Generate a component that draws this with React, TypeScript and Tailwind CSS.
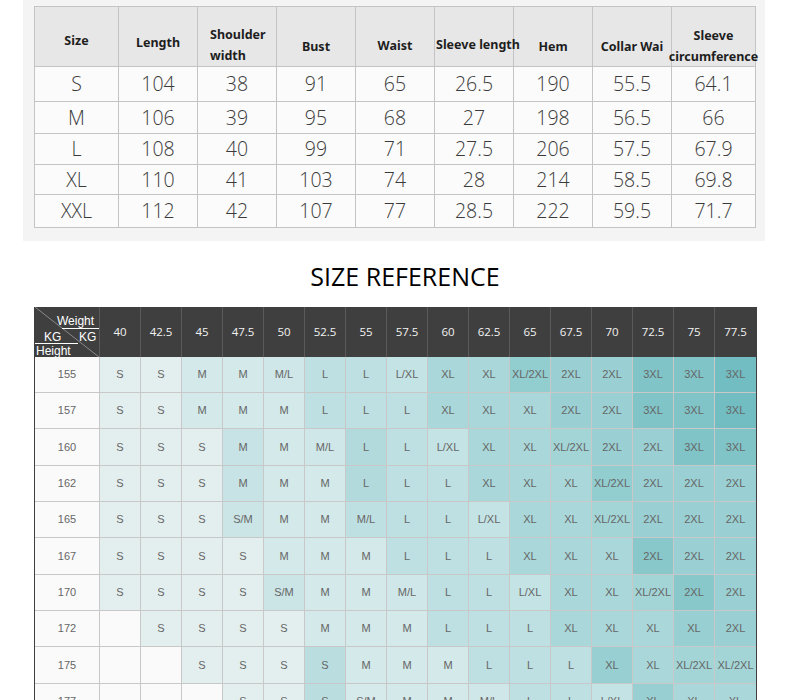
import * as React from 'react';

const measureHead = [
  { lines: ['Size'], box: 'pt-[8px] items-center' },
  { lines: ['Length'], box: 'pt-[12px] items-center' },
  { lines: ['Shoulder', 'width'], box: 'pt-[17px] items-start pl-[12px]' },
  { lines: ['Bust'], box: 'pt-[20px] items-center' },
  { lines: ['Waist'], box: 'pt-[18px] items-center' },
  { lines: ['Sleeve length'], box: 'pt-[16px] items-start pl-[1px]' },
  { lines: ['Hem'], box: 'pt-[20px] items-center' },
  { lines: ['Collar Wai'], box: 'pt-[20px] items-center' },
  { lines: ['Sleeve', 'circumference'], box: 'pt-[19px] items-center' },
];

const measureRows = [
  { h: 'h-[35px]', cells: ['S', '104', '38', '91', '65', '26.5', '190', '55.5', '64.1'] },
  { h: 'h-[32px]', cells: ['M', '106', '39', '95', '68', '27', '198', '56.5', '66'] },
  { h: 'h-[31px]', cells: ['L', '108', '40', '99', '71', '27.5', '206', '57.5', '67.9'] },
  { h: 'h-[30px]', cells: ['XL', '110', '41', '103', '74', '28', '214', '58.5', '69.8'] },
  { h: 'h-[33px]', cells: ['XXL', '112', '42', '107', '77', '28.5', '222', '59.5', '71.7'] },
];

const weights = ['40', '42.5', '45', '47.5', '50', '52.5', '55', '57.5', '60', '62.5', '65', '67.5', '70', '72.5', '75', '77.5'];

// '-' = empty cell, '*' = darker shade of the same size
const chart = [
  ['155', 'S S M M M/L L L L/XL XL XL XL/2XL* 2XL 2XL 3XL 3XL 3XL*'],
  ['157', 'S S M M M L L L XL XL XL 2XL 2XL 3XL 3XL 3XL*'],
  ['160', 'S S S M* M M/L L* L L/XL XL XL XL/2XL 2XL 2XL 3XL 3XL'],
  ['162', 'S S S M* M M L* L L XL XL XL XL/2XL* 2XL 2XL 2XL'],
  ['165', 'S S S S/M* M M M/L* L L L/XL XL XL XL/2XL 2XL 2XL 2XL'],
  ['167', 'S S S S M M M L L L XL XL XL 2XL* 2XL 2XL'],
  ['170', 'S S S S S/M* M M M/L L L L/XL XL XL XL/2XL 2XL* 2XL'],
  ['172', '- S S S S M M M L L L XL XL XL XL* 2XL'],
  ['175', '- - S S S S* M M M L L L XL* XL XL/2XL XL/2XL'],
  ['177', '- - - S S S* S/M M M M/L L L L/XL XL* XL XL'],
];

const rowHeights = ['h-[36px]', 'h-[36px]', 'h-[37px]', 'h-[36px]', 'h-[36px]', 'h-[37px]', 'h-[36px]', 'h-[36px]', 'h-[37px]', 'h-[36px]'];

const shade: Record<string, string> = {
  '-': 'bg-[#fafafa]',
  S: 'bg-[#e3efef]',
  'S*': 'bg-[#badde0]',
  'S/M': 'bg-[#d6eaeb]',
  'S/M*': 'bg-[#cbe5e6]',
  M: 'bg-[#d3e9ea]',
  'M*': 'bg-[#c7e3e5]',
  'M/L': 'bg-[#cfe7e8]',
  'M/L*': 'bg-[#bfe0e2]',
  L: 'bg-[#bfe0e2]',
  'L*': 'bg-[#b2dadc]',
  'L/XL': 'bg-[#c4e3e5]',
  XL: 'bg-[#aad8da]',
  'XL*': 'bg-[#98cfd2]',
  'XL/2XL': 'bg-[#a3d5d7]',
  'XL/2XL*': 'bg-[#92cdd0]',
  '2XL': 'bg-[#9ad0d3]',
  '2XL*': 'bg-[#88c8cb]',
  '3XL': 'bg-[#80c4c8]',
  '3XL*': 'bg-[#72bdc2]',
};

function CornerCell() {
  return (
    <div className="relative h-[50px] border-r border-[#5a5a5a] bg-[#3f3f3f] text-[12px] leading-none text-white font-['Liberation_Sans',Arial,sans-serif]">
      <svg className="absolute inset-0" width="64" height="50" viewBox="0 0 64 50">
        <line x1="0" y1="0" x2="64" y2="50" stroke="#8a8a8a" strokeWidth="1" />
        <line x1="27" y1="21.5" x2="64" y2="21.5" stroke="#ffffff" strokeWidth="1" />
        <line x1="0" y1="36.5" x2="43" y2="36.5" stroke="#ffffff" strokeWidth="1" />
      </svg>
      <span className="absolute left-[22px] top-[8px]">Weight</span>
      <span className="absolute left-[9px] top-[24px]">KG</span>
      <span className="absolute left-[44px] top-[24px]">KG</span>
      <span className="absolute left-[1px] top-[38px]">Height</span>
    </div>
  );
}

export default function App() {
  return (
    <div className="w-[790px] min-h-[700px] overflow-hidden bg-white">
      {/* measurement table */}
      <div className="ml-[23px] w-[742px] bg-[#f4f4f4] pl-[11px] pt-[6px] pb-[13px]">
        <div className="grid w-[722px] grid-cols-[84px_repeat(7,79px)_84px] border-l border-t border-[#c4c4c4]">
          {measureHead.map((h, i) => (
            <div
              key={i}
              className={`flex h-[60px] flex-col justify-center border-b border-r border-[#c4c4c4] bg-[#e7e7e7] text-[12.5px] font-bold leading-[21px] text-[#1e1e1e] whitespace-nowrap font-['Noto_Sans',Arial,sans-serif] ${h.box}`}
            >
              {h.lines.map(l => (
                <span key={l} className="relative z-10">{l}</span>
              ))}
            </div>
          ))}
          {measureRows.map(r =>
            r.cells.map((c, j) => (
              <div
                key={r.cells[0] + j}
                className={`flex items-center justify-center border-b border-r border-[#c4c4c4] bg-[#fbfbfb] text-[19.5px] font-light text-[#3a3a3a] font-['Open_Sans','Noto_Sans',sans-serif] ${r.h}`}
              >
                {c}
              </div>
            ))
          )}
        </div>
      </div>

      <h2 className="mt-[20px] h-[30px] pl-[20px] text-center text-[25px] leading-[30px] text-black font-['Open_Sans','Noto_Sans',sans-serif]">
        SIZE REFERENCE
      </h2>

      {/* height / weight chart */}
      <div className="ml-[34px] mt-[16px] w-[723px] border-x border-[#3f3f3f]">
        <div className="grid grid-cols-[65px_repeat(16,41px)]">
          <CornerCell />
          {weights.map((w, i) => (
            <div
              key={w}
              className={`flex h-[50px] items-center justify-center bg-[#3f3f3f] text-[11.5px] text-[#f2f2f2] font-['Open_Sans',sans-serif] ${i < 15 ? 'border-r border-[#5a5a5a]' : ''}`}
            >
              {w}
            </div>
          ))}
          {chart.map(([height, sizes], ri) => (
            <React.Fragment key={height}>
              <div className={`flex items-center justify-center border-b border-r border-[#c8c8c8] bg-[#fafafa] text-[11px] text-[#666] font-['Liberation_Sans',Arial,sans-serif] ${rowHeights[ri]}`}>
                {height}
              </div>
              {sizes.split(' ').map((s, ci) => (
                <div
                  key={ci}
                  className={`flex items-center justify-center border-b border-[#c8c8c8] text-[11px] text-[#666] whitespace-nowrap font-['Liberation_Sans',Arial,sans-serif] ${ci < 15 ? 'border-r' : ''} ${shade[s]} ${rowHeights[ri]}`}
                >
                  {s === '-' ? '' : s.replace('*', '')}
                </div>
              ))}
            </React.Fragment>
          ))}
        </div>
      </div>
    </div>
  );
}
